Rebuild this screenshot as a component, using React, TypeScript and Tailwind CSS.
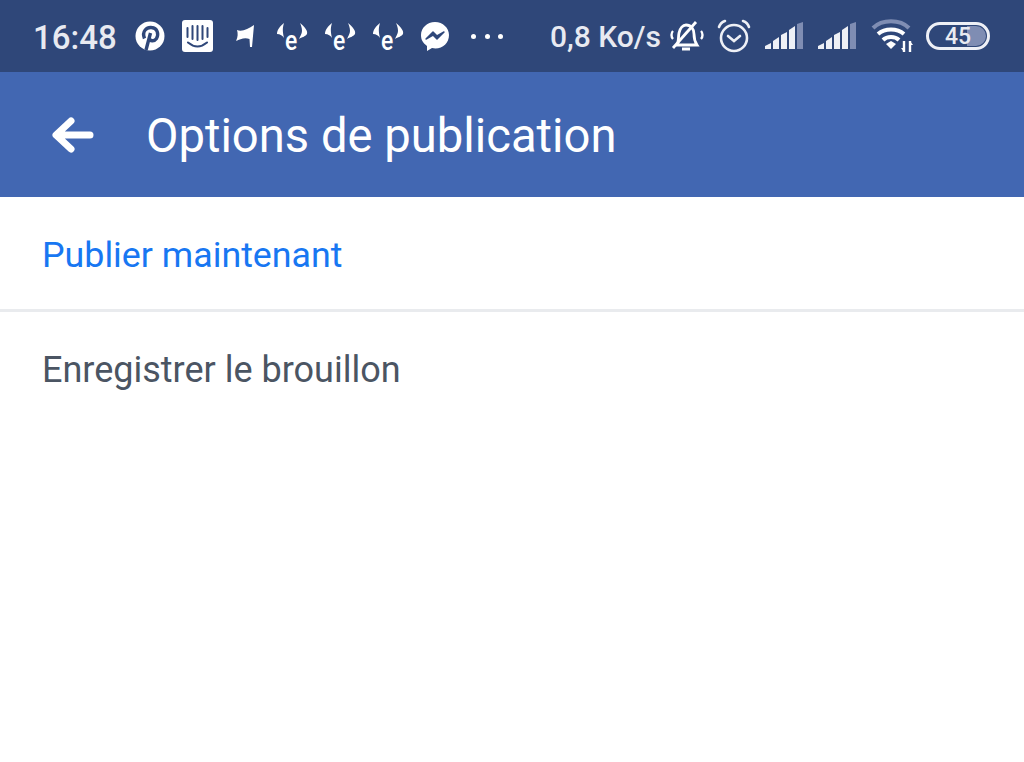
import React from "react";

const E = () => (
  <svg width="34" height="40" viewBox="0 -4 34 40" fill="none" className="shrink-0">
    <path d="M9 3 C5 6 2 10 2 14 C5 14 8 16 9 18 C8 13 7 9 9 3Z" fill="white" />
    <path d="M25 3 C30 7 33 11 32 14 C30 17 27 17 24 19 C25 16 27 14 27 11 C27 8 26 5 25 3Z" fill="white" />
    <text x="19" y="30" textAnchor="middle" fontSize="27" fontWeight="500" fill="white" fontFamily="Roboto, sans-serif" transform="scale(0.85 1)">e</text>
  </svg>
);

const Signal = () => (
  <svg width="38" height="28" viewBox="0 0 38 28" className="shrink-0">
    <path d="M0 27 V24 L6 21 V27Z" fill="#eef0f6" />
    <path d="M8 27 V19 L14 15 V27Z" fill="#eef0f6" />
    <path d="M16 27 V13 L22 10 V27Z" fill="#eef0f6" />
    <path d="M24 27 V8 L30 4 V27Z" fill="#eef0f6" />
    <path d="M32 27 V2 L38 0 V27Z" fill="#7f8db3" />
  </svg>
);

export default function App() {
  return (
    <div className="min-h-[762px] w-full bg-white font-['Roboto',sans-serif]">
      <div className="flex h-[72px] items-center bg-[#2f4779] pl-[33px] text-white">
        <span className="w-[102px] shrink-0 pt-[3px] text-[33px] font-medium text-[#e8eaf1]">16:48</span>
        <svg width="30" height="30" viewBox="0 0 30 30" className="shrink-0">
          <circle cx="15" cy="15" r="14.5" fill="white" />
          <path d="M11 29 L15.5 12 M9.5 17.5 C6.5 10 12 6 16.5 6.5 C22.5 7 24 13 21.5 17.5 C19 21 15 20 14 17.5" fill="none" stroke="#2f4779" strokeWidth="3.4" />
        </svg>
        <div className="ml-[17px] flex h-[32px] w-[31px] shrink-0 items-center justify-center rounded-[3px] bg-white">
          <svg width="25" height="26" viewBox="0 0 25 26" fill="none" stroke="#2f4779" strokeWidth="2" strokeLinecap="round">
            <path d="M2.5 5V14 M7.5 3V16 M12.5 3V17 M17.5 3V16 M22.5 5V14 M3 19.5C9 24.5 16 24.5 22 19.5" />
          </svg>
        </div>
        <svg width="20" height="24" viewBox="0 0 20 24" className="ml-[22px] shrink-0">
          <path d="M2 6 C7 8 13 5 19 1 L17 23 L15 23 L14.5 15 C10 13 5 15 1 17 C3 13 3 9 2 6Z" fill="white" />
        </svg>
        <div className="ml-[20px] flex w-[130px] shrink-0 justify-between">
          <E />
          <E />
          <E />
        </div>
        <svg width="30" height="31" viewBox="0 0 30 31" className="ml-[15px] shrink-0">
          <path d="M15 1 C7 1 1 7 1 14 C1 19 3 22 7 25 V30 L12 27 C21 29 29 23 29 14 C29 7 23 1 15 1Z" fill="white" />
          <path d="M6 18 L13 11 L17 15 L24 11 L17 18 L13 14Z" fill="#2f4779" stroke="#2f4779" strokeWidth="1.5" strokeLinejoin="round" />
        </svg>
        <div className="ml-[21px] flex w-[32px] shrink-0 justify-between">
          <span className="size-[5px] rounded-full bg-white" />
          <span className="size-[5px] rounded-full bg-white" />
          <span className="size-[5px] rounded-full bg-white" />
        </div>
        <span className="ml-[47px] w-[118px] shrink-0 whitespace-nowrap text-[30px] font-medium text-[#e8eaf1]">0,8 Ko/s</span>
        <svg width="36" height="36" viewBox="0 0 36 36" fill="none" stroke="white" strokeWidth="2.8" className="shrink-0">
          <path d="M9 27 C11 24 10 20 11 15 C12 10 15 7 18 7 C23 7 26 11 26 16 C26 21 27 24 29 27 H9Z" />
          <path d="M5 30 L28 4" />
          <path d="M5 13 C3 15 3 19 5 21 M33 13 C35 15 35 19 33 21" strokeWidth="2.4" />
          <path d="M14 31 H22" strokeWidth="3" />
        </svg>
        <svg width="36" height="36" viewBox="0 0 36 36" fill="none" stroke="#eef0f6" strokeWidth="2.6" strokeLinecap="round" className="ml-[12px] shrink-0">
          <circle cx="18" cy="20" r="13" />
          <path d="M12 18 L18 23 L24 18 M3 9 C4 6 6 4 9 3 M27 3 C30 4 32 6 33 9" />
        </svg>
        <div className="ml-[13px] flex w-[91px] shrink-0 justify-between">
          <Signal />
          <Signal />
        </div>
        <svg width="42" height="36" viewBox="0 0 42 36" fill="none" strokeWidth="4" className="ml-[15px] shrink-0">
          <path d="M2 10 C11 1 29 1 38 10" stroke="#7f8db3" />
          <path d="M7 16 C14 10 26 10 33 16 M12 22 C16 18 24 18 28 22" stroke="white" />
          <path d="M15 26 L20 23 L25 26 L20 31Z" fill="white" stroke="none" />
          <path d="M33 23 V34 M39 23 V34" stroke="white" strokeWidth="2.4" />
          <path d="M30 30 L33 34 L33 30Z M39 23 L42 27 L39 27Z" fill="white" stroke="none" />
        </svg>
        <div className="relative ml-[13px] h-[28px] w-[64px] shrink-0 overflow-hidden rounded-full border-[3px] border-[#eef0f6]">
          <div className="absolute inset-y-[1px] right-[1px] w-[32%] rounded-r-full bg-[#7f8db3]" />
          <span className="absolute inset-0 flex items-center justify-center text-[23px] font-medium leading-none text-[#e8eaf1]">45</span>
        </div>
      </div>
      <div className="flex h-[125px] items-center bg-[#4267b2] pl-[52px] text-white">
        <svg width="42" height="36" viewBox="0 0 42 36" fill="none" stroke="white" strokeWidth="7" strokeLinecap="round" strokeLinejoin="round">
          <path d="M19 4 L4 18 L19 32 M5 18 H38" />
        </svg>
        <span className="ml-[52px] pt-[4px] text-[47.2px] leading-none text-white">Options de publication</span>
      </div>
      <div className="flex h-[115px] items-center border-b-[3px] border-[#e9ebee] pl-[42px] pt-[6px] text-[35.8px] text-[#1877f2]">Publier maintenant</div>
      <div className="flex h-[116px] items-center pl-[42px] text-[36px] text-[#4b5563]">Enregistrer le brouillon</div>
    </div>
  );
}
